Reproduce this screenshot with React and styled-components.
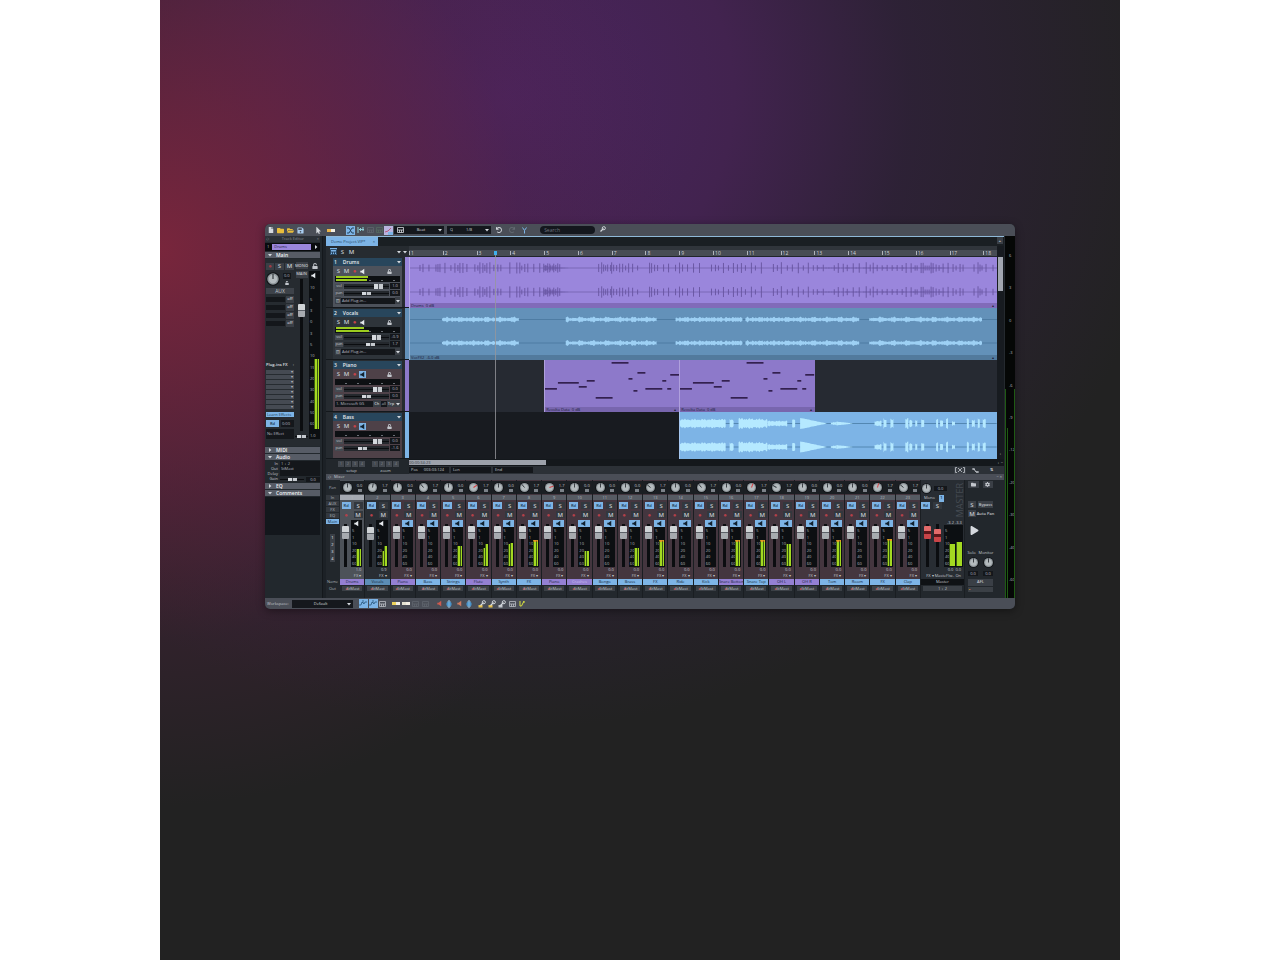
import { useState } from 'react';
import {
  FaFile,
  FaFolder,
  FaFolderOpen,
  FaMousePointer,
  FaPlay,
  FaRedo,
  FaSave,
  FaTools,
  FaUndo,
  FaUnlock,
  FaCog,
} from 'react-icons/fa';
import styled, { createGlobalStyle, css } from 'styled-components';

const GlobalStyle = createGlobalStyle`
  * {
    box-sizing: border-box;
  }
  body {
    margin: 0;
    background-color: white;
    font-family: 'Open Sans', 'Noto Sans', sans-serif;
    font-size: 4px;
    line-height: 6px;
    color: #c3c7cd;
  }
  button, input, select, textarea {
    appearance: none;
    margin: 0;
    padding: 0;
    border: none;
    border-radius: 0;
    outline: none;
    background: none;
    font: inherit;
    color: inherit;
    min-width: 0;
  }
  svg {
    display: block;
    flex-shrink: 0;
  }
`;

const PURPLE = '#9a86dc';
const BLUE = '#7db4e6';

export const Backdrop = styled.main`
  width: 75%;
  min-height: 100vh;
  margin: 0 auto;
  padding: 224px 105px 0;
  background:
    radial-gradient(ellipse 54% 58% at 0% 26%, rgba(124, 38, 60, 0.95), rgba(108, 36, 62, 0.65) 38%, rgba(84, 34, 66, 0.28) 70%, rgba(60, 34, 56, 0) 100%),
    radial-gradient(ellipse 70% 66% at 36% 10%, #4a2460, #42234f 34%, rgba(50, 33, 62, 0.7) 60%, rgba(34, 34, 34, 0) 100%),
    #222222;
`;

export const Window = styled.div`
  border-radius: 5px;
  overflow: hidden;
  background-color: #1c2126;
  box-shadow: 0 2px 8px rgba(0, 0, 0, 0.4);
`;

export const Bar = styled.div`
  display: flex;
  align-items: center;
  height: ${(props) => props.$height || 12}px;
  padding: 0 2px;
  gap: 3px;
  background-color: #4a4e57;
`;

export const Group = styled.div`
  display: flex;
  align-items: center;
  gap: ${(props) => props.$gap || 3}px;
  margin-left: ${(props) => props.$left || 0}px;
`;

export const IconBtn = styled.button`
  display: flex;
  align-items: center;
  justify-content: center;
  width: ${(props) => props.$width || 7}px;
  height: 9px;
  color: ${(props) => props.$color || '#d5d9de'};
  background-color: ${(props) => (props.$on ? BLUE : 'transparent')};
`;

export const BlackSelect = styled.select`
  width: ${(props) => props.$width}px;
  height: 8px;
  background-color: #15181d;
  color: #d5d9de;
  text-align-last: center;
`;

export const SelectWrap = styled.div`
  display: flex;
  align-items: center;
  padding: 0 2px 0 3px;
  background-color: #15181d;
`;

export const SearchBox = styled.input`
  width: 55px;
  height: 8px;
  margin-left: 9px;
  padding: 0 4px;
  border-radius: 4px;
  font-size: 5px;
  background-color: #14171d;
  &::placeholder {
    color: #6f757e;
  }
`;

export const Body = styled.div`
  display: grid;
  grid-template-columns: 58px minmax(0, 1fr) 11px;
  height: 362px;
`;

/* track editor */
export const Side = styled.aside`
  display: flex;
  flex-direction: column;
  gap: 1px;
  padding-right: 2px;
  background-color: #22282d;
  border-right: 1px solid #14181c;
`;

export const SideTitle = styled.div`
  display: flex;
  justify-content: space-between;
  height: 6px;
  padding: 0 1px;
  background-color: #2b3036;
  color: #888d95;
`;

export const NameRow = styled.div`
  display: flex;
  align-items: center;
  gap: 3px;
  height: 8px;
  padding: 0 2px;
  background-color: #090b0e;
`;

export const NameField = styled.input`
  flex: 1;
  height: 6px;
  padding: 0 2px;
  background-color: ${PURPLE};
  color: #241f4a;
`;

export const SectionHead = styled.button`
  display: flex;
  align-items: center;
  gap: 4px;
  height: 6px;
  padding: 0 3px;
  background-color: #575c66;
  color: #f0f2f4;
  font-size: 5px;
  font-weight: 600;
`;

export const Strip = styled.div`
  display: grid;
  grid-template-columns: 28px minmax(0, 1fr) 11px;
  column-gap: 1px;
  height: 187px;
  padding: 3px 0 0 1px;
  background-color: #262b30;
`;

export const StripCol = styled.div`
  display: flex;
  flex-direction: column;
  gap: ${(props) => props.$gap || 0}px;
  align-items: ${(props) => props.$align || 'stretch'};
  min-width: 0;
`;

export const Small = styled.button`
  display: flex;
  align-items: center;
  justify-content: center;
  flex: ${(props) => (props.$width ? `0 0 ${props.$width}px` : 1)};
  height: 7px;
  font-size: ${(props) => props.$size || 4}px;
  font-weight: 600;
  white-space: nowrap;
  color: ${(props) => props.$color || '#c3c7cd'};
  background-color: ${(props) => props.$bg || '#3a3f46'};
  ${(props) =>
    props.$on &&
    css`
      background-color: ${BLUE};
      color: #173048;
    `}
`;

export const AuxLabel = styled.div`
  height: 6px;
  text-align: center;
  font-size: 5px;
  background-color: #3d4249;
`;

export const Row = styled.div`
  display: flex;
  align-items: center;
  justify-content: ${(props) => props.$justify || 'flex-start'};
  gap: ${(props) => props.$gap || 0}px;
  flex-shrink: 0;
  height: ${(props) => props.$height}px;
`;

export const Slot = styled.div`
  flex: ${(props) => (props.$width ? `0 0 ${props.$width}px` : 1)};
  height: ${(props) => props.$height || 5}px;
  padding: 0 1px;
  white-space: nowrap;
  line-height: ${(props) => props.$height || 5}px;
  text-align: ${(props) => props.$align || 'left'};
  background-color: ${(props) => props.$bg || '#14171b'};
  color: ${(props) => props.$color || '#b5b9c0'};
`;

export const SliderLabel = styled.label`
  flex: 0 0 8px;
  height: 5px;
  line-height: 4px;
  text-align: center;
  background-color: #454a51;
`;

export const AudioLabel = styled.label`
  width: 13px;
  text-align: right;
`;

export const Spacer = styled.div`
  flex: 1;
`;

export const Meter = styled.div`
  display: grid;
  grid-template-columns: minmax(0, 1fr) auto;
  padding: ${(props) => props.$pad || 0}px 1px 1px;
  flex: 1;
  background-color: #0c0f12;
`;

export const Ticks = styled.div`
  display: flex;
  flex-direction: column;
  justify-content: space-between;
  line-height: 4px;
  color: #b4b8be;
`;

export const Levels = styled.div`
  display: flex;
  align-items: flex-end;
  gap: ${(props) => (props.$wide ? 1 : 0)}px;
  width: ${(props) => (props.$wide ? 13 : 5)}px;
  padding-bottom: ${(props) => props.$lift || 0}px;
`;

export const Level = styled.div`
  flex: 1;
  border-top: ${(props) => (props.$hot ? '2px solid #e39a25' : 'none')};
  border-left: 1px solid #3c5a12;
  background-color: #a3d921;
`;

export const VFader = styled.input.attrs({ type: 'range' })`
  writing-mode: vertical-lr;
  direction: rtl;
  width: 7px;
  height: ${(props) => props.$height || 43}px;
  background: linear-gradient(90deg, transparent 2px, #0b0d10 2px, #0b0d10 5px, transparent 5px);
  &::-webkit-slider-thumb {
    appearance: none;
    width: 7px;
    height: 13px;
    border-radius: 1px;
    background: ${(props) =>
      props.$red
        ? 'linear-gradient(#e26a6a 40%, #5e1519 40%, #5e1519 60%, #c94448 60%)'
        : 'linear-gradient(#cfd3d6 45%, #5b6067 45%, #5b6067 55%, #a6aaaf 55%)'};
  }
`;

export const HSlider = styled.input.attrs({ type: 'range' })`
  flex: 1;
  width: 100%;
  height: 5px;
  background: linear-gradient(#24282d 2px, #0b0d10 2px, #0b0d10 3px, #24282d 3px);
  &::-webkit-slider-thumb {
    appearance: none;
    width: 9px;
    height: ${(props) => props.$thumb || 3}px;
    background: linear-gradient(90deg, #d5d9de 40%, #4d5259 40%, #4d5259 60%, #c5c9ce 60%);
  }
`;

export const CommentBox = styled.textarea`
  height: 38px;
  resize: none;
  background-color: #13171c;
`;

/* arrange view */
export const Center = styled.section`
  display: flex;
  flex-direction: column;
  margin-left: 3px;
  border-top: 1px solid #8fb9d8;
`;

export const TabRow = styled.div`
  display: flex;
  justify-content: space-between;
  height: 9px;
  padding-right: 1px;
  background-color: #1a1f23;
`;

export const Tab = styled.button`
  display: flex;
  align-items: center;
  justify-content: space-between;
  width: 52px;
  padding: 0 3px 0 5px;
  background-color: ${BLUE};
  color: #25465f;
  white-space: nowrap;
`;

export const Arrange = styled.div`
  display: grid;
  grid-template-columns: 83px minmax(0, 1fr) 7px;
  background-color: #262b30;
`;

export const HeadTools = styled.div`
  display: flex;
  align-items: center;
  gap: 2px;
  height: 11px;
  padding: 0 2px 0 4px;
`;

export const Head = styled.div`
  display: grid;
  grid-template-columns: 6px minmax(0, 1fr) 6px;
  height: ${(props) => props.$height}px;
  border-bottom: 1px solid #14181c;
`;

export const HeadPanel = styled.div`
  display: flex;
  flex-direction: column;
  gap: 1px;
  padding: 0 2px;
  margin: 1px 1px 0;
  background-color: ${(props) => props.$bg};
`;

export const TrackTitle = styled.div`
  display: flex;
  align-items: center;
  gap: 6px;
  height: 8px;
  padding: 0 1px;
  margin: 0 -2px;
  background-color: #28465c;
  color: #e6eaee;
  font-size: 5px;
  font-weight: 600;
`;

export const TrackMeter = styled.div`
  display: flex;
  flex-direction: column;
  gap: 1px;
  height: 6px;
  padding: 0 1px;
  background:
    repeating-linear-gradient(90deg, transparent 0, transparent 10px, #6a6f76 10px, #6a6f76 12px) 0 4px / 100% 1px no-repeat,
    #0d1013;
`;

export const TrackLevel = styled.div`
  height: 2px;
  background-color: #9ccc1f;
`;

export const ColorEdge = styled.div`
  margin-left: 2px;
  background-color: ${(props) => props.$color};
`;

export const Lanes = styled.div`
  position: relative;
`;

export const Ruler = styled.div`
  display: flex;
  height: 11px;
  padding-top: 4px;
  overflow: hidden;
  border-bottom: 1px solid #20252b;
  background: linear-gradient(#30353b 4px, #474c54 4px);
`;

export const BarMark = styled.div`
  display: flex;
  align-items: center;
  gap: 1px;
  flex: 0 0 calc(100% / 17.4);
  font-size: 5px;
  color: #cfd3d8;
  &::before {
    content: '';
    width: 1px;
    height: 4px;
    background-color: #b0b4ba;
  }
`;

// clips start and end on whole bars, the lane shows 17.4 of them
export const Lane = styled.div`
  display: flex;
  height: ${(props) => props.$height}px;
  padding-left: calc(100% * ${(props) => props.$start || 0} / 17.4);
  background-color: ${(props) => props.$bg};
`;

export const Clip = styled.div`
  display: flex;
  flex-direction: column;
  flex: 0 0 ${(props) => (props.$bars ? `calc(100% * ${props.$bars} / 13.4)` : '100%')};
  border-left: 1px solid rgba(240, 235, 255, 0.35);
  background-color: ${(props) => props.$bg};
  > svg {
    width: 100%;
    flex: 1;
    min-height: 0;
  }
`;

export const ClipFoot = styled.div`
  display: flex;
  justify-content: space-between;
  height: 5px;
  padding: 0 3px 0 1px;
  line-height: 5px;
  color: #1d1f3c;
  background-color: ${(props) => props.$bg};
`;

export const Playhead = styled.div`
  position: absolute;
  top: 5px;
  bottom: 0;
  left: 14.6%;
  width: 1px;
  background-color: rgba(150, 150, 155, 0.8);
  &::before {
    content: '';
    position: absolute;
    left: -1px;
    width: 3px;
    height: 4px;
    background-color: #3fb0ee;
  }
`;

export const VScroll = styled.div`
  display: flex;
  flex-direction: column;
  align-items: center;
  justify-content: space-between;
  padding: 11px 0 2px;
  background-color: #171b20;
  &::before {
    content: '';
    width: 5px;
    height: 34px;
    background-color: #a2a7b1;
  }
`;

export const Footer = styled.div`
  display: grid;
  grid-template-columns: 83px minmax(0, 1fr);
  height: 15px;
  background-color: #22272c;
`;

export const Squares = styled.div`
  display: grid;
  grid-template-columns: repeat(4, 6px);
  grid-auto-rows: 6px;
  gap: 1px;
  padding-top: 2px;
  > button {
    background-color: #43484f;
    color: #7f848b;
  }
  > span {
    grid-column: 1 / -1;
    text-align: center;
  }
`;

export const HScroll = styled.div`
  display: flex;
  justify-content: space-between;
  height: 7px;
  padding: 1px 0;
  background-color: #14181c;
  > div {
    width: 23%;
    height: 5px;
    background-color: #9da2ab;
    color: #3a4048;
    line-height: 5px;
  }
`;

export const Transport = styled.div`
  display: flex;
  align-items: center;
  gap: 2px;
  height: 8px;
  background-color: #2c3137;
`;

export const Field = styled.div`
  display: flex;
  gap: 6px;
  width: 40px;
  height: 6px;
  padding: 0 2px;
  background-color: #14171b;
`;

/* console */
export const Console = styled.div`
  display: grid;
  grid-template-columns: 14px minmax(0, 1fr) 44px 34px 5px;
  flex: 1;
  background-color: #22272c;
`;

export const Labels = styled.div`
  display: flex;
  flex-direction: column;
  padding: 1px 1px 0 0;
  text-align: center;
  color: #a9aeb5;
`;

export const Channels = styled.div`
  display: grid;
  grid-template-columns: repeat(23, minmax(0, 1fr));
`;

export const ChannelBox = styled.div`
  display: flex;
  flex-direction: column;
  padding-top: 1px;
  border-right: 1px solid #1a1e22;
  background-color: ${(props) => props.$bg || '#44363f'};
`;

export const KnobRow = styled.div`
  display: flex;
  align-items: center;
  justify-content: space-around;
  height: 13px;
  margin-bottom: 1px;
  background-color: #1b1f23;
`;

export const PanValue = styled.div`
  display: flex;
  flex-direction: column;
  align-items: center;
  gap: 1px;
  line-height: 5px;
  &::after {
    content: '';
    width: 4px;
    height: 3px;
    background-color: #7c8289;
  }
`;

export const Num = styled.div`
  display: flex;
  justify-content: center;
  height: 5px;
  margin-bottom: 1px;
  line-height: 5px;
  color: ${(props) => props.$color || '#b5b9c0'};
  background-color: ${(props) => props.$bg || '#565b63'};
`;

export const FaderRow = styled.div`
  display: grid;
  grid-template-columns: 11px minmax(0, 1fr);
  height: 47px;
  margin-top: 1px;
  padding-right: 2px;
  > input {
    align-self: end;
    justify-self: center;
  }
`;

export const Value = styled.div`
  height: ${(props) => props.$height || 5}px;
  padding: 0 3px;
  line-height: ${(props) => props.$height || 5}px;
  text-align: right;
  white-space: nowrap;
`;

export const ChannelName = styled.div`
  height: 6px;
  white-space: nowrap;
  text-align: center;
  background-color: ${(props) => props.$bg};
  color: ${(props) => props.$color || '#14263a'};
`;

export const Out = styled.div`
  flex: 1;
  padding: 1px 2px 0;
  background-color: #23282d;
  > div {
    height: 5px;
    white-space: nowrap;
    line-height: 5px;
    text-align: center;
    background-color: #3b4046;
  }
  i {
    color: #e0625c;
  }
`;

export const MasterText = styled.div`
  writing-mode: vertical-rl;
  transform: rotate(180deg);
  font-size: 9px;
  line-height: 8px;
  color: #454b52;
`;

export const MasterKnob = styled.div`
  display: flex;
  align-items: center;
  gap: 2px;
  width: 26px;
  height: 14px;
`;

export const MasterFaders = styled.div`
  display: grid;
  grid-template-columns: 9px 9px minmax(0, 1fr);
  column-gap: 1px;
  height: 47px;
  margin-top: 1px;
  padding: 0 1px 0 3px;
  > input {
    align-self: end;
  }
`;

export const Extras = styled.div`
  display: flex;
  flex-direction: column;
  gap: 2px;
  padding: 1px 6px 6px 3px;
`;

export const PeakMeter = styled.div`
  display: grid;
  grid-template-columns: 2px 2px minmax(0, 1fr) 1px;
  background-color: #050706;
  border-left: 1px solid #24292e;
  > ${Ticks} {
    padding: 18px 0 16px;
  }
`;

export const PeakLine = styled.div`
  margin-top: ${(props) => props.$top}px;
  border-left: 1px solid #1f5a14;
`;

const Knob = ({ size = 11, angle = 0, red, label }) => (
  <svg width={size} height={size} viewBox="0 0 12 12" role="img" aria-label={label}>
    <circle cx="6" cy="6" r="5.8" fill="#0f1215" />
    <circle cx="6" cy="6" r="4.9" fill="#8f979b" />
    <circle cx="6" cy="6" r="3.6" fill="#b4bbbe" />
    <path
      d="M6 1.4V6"
      stroke={red ? '#d8393c' : '#30363a'}
      strokeWidth="1"
      transform={`rotate(${angle} 6 6)`}
    />
  </svg>
);

const Speaker = ({ color = '#e6eaee' }) => (
  <svg width="7" height="7" viewBox="0 0 8 8">
    <path d="M1.5 3H3L6 .8v6.4L3 5H1.5z" fill={color} />
  </svg>
);

const Caret = ({ right }) => (
  <svg width="4" height="4" viewBox="0 0 4 4">
    <path d={right ? 'M1 0v4l2.400-2z' : 'M0 1h4L2 3.400z'} fill="#d5d9de" />
  </svg>
);

const Chips = ({ colors }) => (
  <svg width="8" height="5" viewBox="0 0 8 5">
    <path d="M0 1h4v3H0z" fill={colors[0]} />
    <path d="M4 1h4v3H4z" fill={colors[1]} />
  </svg>
);

const Panels = ({ color }) => (
  <svg width="7" height="6" viewBox="0 0 7 6">
    <path d="M.5.5h6v5h-6zM.5 3h6M2.500 3v2.500M4.500 3v2.500" stroke={color} strokeWidth=".8" fill="none" />
  </svg>
);

const Globe = () => (
  <svg width="6" height="8" viewBox="0 0 6 8">
    <circle cx="3" cy="4" r="2.600" fill="#4a93c9" />
    <path d="M3 0v8M1.500 2L3 .5 4.500 2M1.500 6L3 7.500 4.500 6" stroke="#aad4ef" strokeWidth=".6" fill="none" />
  </svg>
);

const Wrench = ({ chip }) => (
  <svg width="8" height="8" viewBox="0 0 8 8">
    <path d="M.5 5h4v2.500h-4z" fill={chip} />
    <path d="M2.500 5.500L5.500 2.500" stroke="#d5d9de" strokeWidth="1.200" />
    <circle cx="5.800" cy="2.200" r="1.600" fill="none" stroke="#d5d9de" strokeWidth=".9" />
  </svg>
);

const Nodes = () => (
  <svg width="8" height="7" viewBox="0 0 8 7">
    <path d="M0 5h2l1-3 2 2 1-2h2M4 0v3" stroke="#2c587c" strokeWidth=".8" fill="none" />
  </svg>
);

// horizontal position of every drum hit on a 588 wide lane
const drumHits = [
  10, 13, 19, 26, 28, 30, 35, 41, 45, 48, 50, 53, 57, 65, 68, 70, 73, 75, 77,
  80, 84, 88, 91, 100, 107, 110, 112, 115, 118, 124, 130, 134, 136, 138, 140,
  141, 143, 144, 146, 148, 150, 189, 192, 194, 196, 198, 201, 202, 204, 207,
  210, 213, 216, 219, 223, 228, 240, 242, 245, 248, 254, 259, 266, 270, 273,
  278, 284, 290, 302, 306, 309, 314, 319, 324, 328, 332, 336, 342, 346, 352,
  364, 368, 372, 378, 383, 389, 394, 399, 404, 408, 414, 425, 429, 434, 438,
  444, 450, 457, 461, 464, 468, 473, 478, 483, 488, 493, 497, 502, 506, 508,
  512, 514, 516, 518, 520, 522, 524, 527, 530, 534, 539, 544, 547, 551, 554,
  565, 569, 571, 573, 577, 584,
];

const vocalParts = [
  [32, 109],
  [156, 247],
  [266, 333],
  [336, 450],
  [460, 573],
];

// [from, to, height at start, height at end]
const bassParts = [
  [0, 46, 5, 5],
  [50, 54, 5, 4],
  [59, 88, 6, 5],
  [88, 108, 3, 3],
  [113, 116, 5, 5],
  [121, 148, 6, 0],
  [152, 158, 1, 2],
  [158, 175, 2, 0],
  [196, 203, 3, 3],
  [205, 208, 6, 5],
  [212, 215, 5, 5],
  [227, 230, 6, 6],
  [231, 234, 4, 4],
  [237, 239, 4, 4],
  [243, 246, 5, 5],
  [258, 260, 5, 5],
  [262, 265, 4, 4],
  [268, 270, 6, 6],
  [274, 277, 3, 2],
  [289, 291, 6, 6],
  [294, 297, 4, 4],
  [300, 302, 6, 6],
  [305, 308, 5, 5],
];

const noise = (x) => Math.abs(Math.sin(x * 12.9) * 0.6 + Math.sin(x * 4.1) * 0.4);
const lumps = (x) => Math.abs(Math.sin(x * 0.23) * 0.5 + Math.sin(x * 0.71) * 0.3 + Math.sin(x * 1.9) * 0.3);

const envelope = (from, to, a, b, y, rough = 0.5, shape = noise) => {
  const top = [];
  const bottom = [];
  for (let x = from; x <= to; x += 1) {
    const part = (x - from) / (to - from);
    const h = (a + (b - a) * part) * (1 - rough + rough * shape(x));
    top.push(`${x},${(y - h).toFixed(1)}`);
    bottom.unshift(`${x},${(y + h).toFixed(1)}`);
  }
  return `M${top.join('L')}L${bottom.join('L')}Z`;
};

const DrumWave = () => (
  <svg viewBox="0 0 588 46" preserveAspectRatio="none">
    {[11, 35].map((y) => (
      <g key={y} stroke="#66549f">
        <path d={`M0 ${y}H588`} strokeWidth="0.6" />
        <path d={envelope(134, 160, 3, 0, y, 0.6)} fill="#7866b6" stroke="none" />
        <path d={envelope(408, 540, 1, 1, y, 0.9)} fill="#7866b6" stroke="none" />
        <path
          d={drumHits
            .map((x) => {
              const h = 2.4 + noise(x) * 3.4;
              return `M${x} ${y - h}V${y + h}`;
            })
            .join('')}
          strokeWidth="0.9"
        />
      </g>
    ))}
  </svg>
);

const VocalWave = () => (
  <svg viewBox="0 0 588 47" preserveAspectRatio="none">
    {[11.5, 35].map((y) => (
      <g key={y}>
        <path d={`M0 ${y}H588`} stroke="#3f6e93" strokeWidth="0.6" />
        {vocalParts.map(([from, to]) => (
          <path key={from} d={envelope(from, to, 3, 3, y, 0.65, lumps)} fill="#9dd0f4" />
        ))}
      </g>
    ))}
  </svg>
);

const BassWave = () => (
  <svg viewBox="0 0 319 47" preserveAspectRatio="none">
    {[11.5, 35].map((y) => (
      <g key={y}>
        <path d={`M0 ${y}H319`} stroke="#41739c" strokeWidth="0.7" />
        {bassParts.map(([from, to, a, b]) => (
          <path
            key={from}
            d={envelope(from, to, a, b, y, b === 0 ? 0.1 : 0.4)}
            fill="#b5e9ff"
          />
        ))}
      </g>
    ))}
  </svg>
);

const notes = [
  [0, 28, 12],
  [13, 22, 21],
  [34, 26, 8],
  [42, 20, 8],
  [51, 37, 17],
  [67, 2, 17],
  [84, 18, 4],
  [89, 30, 4],
  [93, 12, 8],
  [101, 28, 17],
  [118, 20, 4],
  [123, 28, 4],
  [126, 14, 9],
];

const Notes = () => (
  <svg viewBox="0 0 135 47" preserveAspectRatio="none">
    {notes.map(([x, y, width]) => (
      <rect key={x} x={x} y={y} width={width} height="1.7" fill="#33204f" />
    ))}
  </svg>
);

const tracks = [
  { name: 'Drums', height: 51, bg: '#4d525b', color: PURPLE, level: [50, 49], vol: 82, pan: 50, values: ['1.0', '0.0'], plug: 'Add Plug-in...' },
  { name: 'Vocals', height: 52, bg: '#2e343a', color: '#6391b9', level: [44, 52], vol: 78, pan: 60, values: ['-0.9', '1.7'], plug: 'Add Plug-in...' },
  { name: 'Piano', height: 52, bg: '#4e4148', color: '#8d79ca', muted: true, vol: 80, pan: 50, values: ['0.0', '0.0'], plug: '1. Microsoft GS' },
  { name: 'Bass', height: 47, bg: '#4e4148', color: BLUE, muted: true, vol: 80, pan: 40, values: ['0.0', '-1.6'] },
];

const TrackHead = ({ track, index }) => {
  const [muted, setMuted] = useState(Boolean(track.muted));
  return (
    <Head $height={track.height}>
      <span />
      <HeadPanel $bg={track.bg}>
        <TrackTitle>
          <span>{index + 1}</span>
          <span>{track.name}</span>
          <Spacer />
          <Caret />
        </TrackTitle>
        <Row $height={8} $gap={1}>
          <Small $width={7} $size={6} $bg="transparent">S</Small>
          <Small $width={7} $size={6} $bg="transparent">M</Small>
          <Small $width={7} $size={6} $color="#c5444c" $bg="transparent" aria-label="Record">●</Small>
          <Small $width={7} $on={muted} $bg="transparent" aria-label="Monitor" onClick={() => setMuted(!muted)}>
            <Speaker color={muted ? '#10202e' : '#e6eaee'} />
          </Small>
          <Spacer />
          <FaUnlock size={5} />
          <Group $left={7} />
        </Row>
        <TrackMeter>
          {(track.level || []).map((width, idx) => (
            <TrackLevel key={idx} style={{ width: `${width}%` }} />
          ))}
        </TrackMeter>
        {['vol', 'pan'].map((el, idx) => (
          <Row key={el} $height={6} $gap={1}>
            <SliderLabel htmlFor={`${el}${index}`}>{el}</SliderLabel>
            <HSlider
              id={`${el}${index}`}
              $thumb={el === 'vol' ? 5 : 3}
              defaultValue={el === 'vol' ? track.vol : track.pan}
            />
            <Slot $width={10} $height={6} $align="center">{track.values[idx]}</Slot>
          </Row>
        ))}
        {track.plug && (
          <Row $height={7}>
            {!track.muted && <Small $width={6}>◫</Small>}
            <Slot $height={6}>{track.plug}</Slot>
            {track.muted && (
              <>
                <Small $width={8}>Ch</Small>
                <Slot $width={6} $height={6}>all</Slot>
                <Small $width={8}>Trp</Small>
              </>
            )}
            <Small $width={5} aria-label="Plug-in list"><Caret /></Small>
          </Row>
        )}
      </HeadPanel>
      <ColorEdge $color={track.color} />
    </Head>
  );
};

const channels = [
  ['Drums', 'p', [17, 17], '1.0', 0],
  ['Vocals', 'v', [15, 20], '0.9', 10],
  ['Piano', 'p', null, '0.0', 0],
  ['Bass', 'b', null, '0.0', -40],
  ['Strings', 'b', [20, 20], '0.0', 0],
  ['Flute', 'p', [18, 22], '0.0', 55],
  ['Synth', 'b', [22, 23], '0.0', 0],
  ['FX', 'b', [26, 26], '0.0', -40],
  ['Piano', 'p', null, '0.0', 70],
  ['Crashes', 'c', [15, 15], '0.0', 0],
  ['Bongo', 'b', null, '0.0', 0],
  ['Brass', 'b', [18, 18], '0.0', 0],
  ['FX', 'b', [26, 26], '0.0', -50],
  ['Ride', 'b', null, '0.0', 0],
  ['Kick', 'b', null, '0.0', -40],
  ['Snare Bottom', 'p', [26, 26], '0.0', 0],
  ['Snare Top', 'b', [26, 26], '0.0', 20],
  ['OH L', 'p', [22, 22], '0.0', -60],
  ['OH R', 'p', null, '0.0', 0],
  ['Tom', 'b', [26, 26], '0.0', 0],
  ['Room', 'b', null, '0.0', 0],
  ['FX', 'b', [27, 27], '0.0', 15],
  ['Clap', 'b', null, '0.0', -50],
];

const nameColors = { p: '#9480d3', v: '#5c8db5', b: BLUE, c: '#9480d3' };

const meterScale = ['5', '1', '10', '20', '40', '60'];

const Channel = ({ channel, index }) => {
  const [name, color, level, value, angle] = channel;
  const audible = index < 2;
  const bg = index === 0 ? '#4d5259' : index === 1 ? '#292e34' : undefined;
  return (
    <ChannelBox $bg={bg}>
      <KnobRow>
        <Knob label={`${name} pan`} angle={angle} red={angle > 12} />
        <PanValue>{angle === 0 ? '0.0' : '1.7'}</PanValue>
      </KnobRow>
      <Num $bg={index === 0 ? '#a4a9b1' : undefined}>{index + 1}</Num>
      <Row $height={9} $gap={3} $justify="center">
        <Small $width={9} $on>Rd</Small>
        <Small $width={9} $size={6} $bg="#33383e">S</Small>
      </Row>
      <Row $height={9} $gap={3} $justify="center">
        <Small $width={9} $size={6} $color="#b5404a" $bg="transparent" aria-label="Record">●</Small>
        <Small $width={9} $size={6} $bg="#33383e">M</Small>
      </Row>
      <FaderRow>
        <VFader aria-label={`${name} volume`} defaultValue={index === 1 ? 90 : 94} />
        <StripCol>
          <Small $width={7} $on={!audible} $bg="#0c0f12" aria-label={`${name} monitor`}>
            <Speaker color={audible ? '#e6eaee' : '#10202e'} />
          </Small>
          <Meter $pad={2}>
            <Ticks>
              {meterScale.map((el) => (
                <span key={el}>{el}</span>
              ))}
            </Ticks>
            <Levels>
              {(level || []).map((h, idx) => (
                <Level key={idx} $hot={h > 25} style={{ height: `${h}px` }} />
              ))}
            </Levels>
          </Meter>
        </StripCol>
      </FaderRow>
      <Value>{value}</Value>
      <Value $height={7}>FX ▾</Value>
      <ChannelName $bg={nameColors[color]} $color={color === 'c' ? '#c9bdf0' : undefined}>{name}</ChannelName>
      <Out>
        <div><i>◂</i>StMast</div>
      </Out>
    </ChannelBox>
  );
};

const TrackEditor = () => (
  <Side>
    <SideTitle>
      <span>◇</span>
      <span>Track Editor</span>
      <span>×</span>
    </SideTitle>
    <NameRow>
      <span>1</span>
      <NameField aria-label="Track name" defaultValue="Drums" />
      <Caret right />
    </NameRow>
    <SectionHead><Caret />Main</SectionHead>
    <Strip>
      <StripCol $gap={2}>
        <Row $height={8} $gap={1}>
          <Small $width={8} $size={6} $color="#a23a43" aria-label="Record">●</Small>
          <Small $width={9} $size={6}>S</Small>
          <Small $width={9} $size={6}>M</Small>
        </Row>
        <Row $height={14} $gap={3}>
          <Knob size={14} label="Pan" />
          <StripCol $gap={2} $align="center">
            <Slot $width={6} $height={6}>0.0</Slot>
            <FaUnlock size={4} />
          </StripCol>
        </Row>
        <AuxLabel>AUX</AuxLabel>
        {[1, 2, 3, 4].map((el) => (
          <Row key={el} $height={6} $gap={1}>
            <Slot />
            <Small $width={8}>off</Small>
          </Row>
        ))}
        <Spacer />
        <Row $height={6} $justify="space-between"><b>Plug-ins FX</b><span>‹</span></Row>
        <StripCol $gap={1}>
          {[1, 2, 3, 4, 5, 6, 7, 8].map((el) => (
            <Row key={el} $height={4}>
              <Slot $height={4} $bg="#454a52" $align="right">▾</Slot>
            </Row>
          ))}
        </StripCol>
        <Row $height={7}><Slot $bg={BLUE} $color="#1c3a52">Learn Effects</Slot></Row>
        <Row $height={7} $gap={2}>
          <Small $width={13} $on>Rd</Small>
          <Slot $height={7}>0:00</Slot>
        </Row>
        <Row $height={10}><Slot $height={10}>No Effect</Slot></Row>
        <Row $height={5} />
      </StripCol>
      <StripCol $align="center" $gap={2}>
        <Row $height={7}><Small $width={12}>MONO</Small></Row>
        <Row $height={6}><Small $width={12}>MAIN</Small></Row>
        <VFader $height={152} aria-label="Main volume" defaultValue={82} />
        <Row $height={6}><HSlider aria-label="Width" /></Row>
      </StripCol>
      <StripCol $gap={2}>
        <Row $height={7} $justify="center"><FaUnlock size={6} /></Row>
        <Meter $pad={1}>
          <Ticks>
            <Speaker />
            {['10', '5', '3', '0', '3', '5', '10', '15', '20', '30', '40', '50', '60', '1.0'].map((el, idx) => (
              <span key={idx}>{el}</span>
            ))}
          </Ticks>
          <Levels $lift={9}>
            <Level style={{ height: '70px' }} />
            <Level style={{ height: '70px' }} />
          </Levels>
        </Meter>
        <Row $height={5} />
      </StripCol>
    </Strip>
    <SectionHead><Caret right />MIDI</SectionHead>
    <SectionHead><Caret />Audio</SectionHead>
    <StripCol>
      {[['In', '1 + 2'], ['Out', 'StMast'], ['Delay', '']].map(([label, value]) => (
        <Row key={label} $height={5} $gap={2}>
          <AudioLabel as="span">{label}</AudioLabel>
          <Slot>{value}</Slot>
        </Row>
      ))}
      <Row $height={6} $gap={2}>
        <AudioLabel htmlFor="gain">Gain</AudioLabel>
        <HSlider id="gain" />
        <Slot $width={14} $align="center">0.0</Slot>
      </Row>
    </StripCol>
    <SectionHead><Caret right />EQ</SectionHead>
    <SectionHead><Caret />Comments</SectionHead>
    <CommentBox aria-label="Comments" />
  </Side>
);

const Master = () => (
  <ChannelBox $bg="#282d33">
    <Row $height={38} $justify="space-between">
      <StripCol>
        <MasterKnob>
          <Knob label="Master pan" />
          <Slot $align="center">0.0</Slot>
        </MasterKnob>
        <Row $height={6} $gap={1}>
          <Value $height={6}>Mono</Value>
          <Small $width={5} $on>1</Small>
        </Row>
        <Row $height={9} $gap={3}>
          <Small $width={9} $on>Rd</Small>
          <Small $width={9} $size={6} $bg="#33383e">S</Small>
        </Row>
        <Row $height={9} />
      </StripCol>
      <MasterText>MASTER</MasterText>
    </Row>
    <MasterFaders>
      <VFader $red aria-label="Master left" defaultValue={94} />
      <VFader $red aria-label="Master right" defaultValue={84} />
      <StripCol>
        <Value>-3.2 -3.3</Value>
        <Meter $pad={4}>
          <Ticks>
            {meterScale.map((el) => (
              <span key={el}>{el}</span>
            ))}
          </Ticks>
          <Levels $wide>
            <Level style={{ height: '22px' }} />
            <Level style={{ height: '24px' }} />
          </Levels>
        </Meter>
      </StripCol>
    </MasterFaders>
    <Value>0.0&nbsp; 0.0</Value>
    <Value $height={7}>FX ▾ MasteFlw.. On</Value>
    <ChannelName $bg="#0f1215" $color="#c3c7cd">Master</ChannelName>
    <Out><div>1 + 2</div></Out>
  </ChannelBox>
);

const App = () => {
  const [search, setSearch] = useState('');
  return (
    <Backdrop>
      <GlobalStyle />
      <Window>
        <Bar>
          <Group>
            <IconBtn aria-label="New"><FaFile size={6} /></IconBtn>
            <IconBtn aria-label="Open" $color="#e8bd3c"><FaFolder size={7} /></IconBtn>
            <IconBtn aria-label="Import" $color="#e8bd3c"><FaFolderOpen size={7} /></IconBtn>
            <IconBtn aria-label="Save" $color="#a9cdf0"><FaSave size={7} /></IconBtn>
          </Group>
          <Group $left={8}>
            <IconBtn aria-label="Select"><FaMousePointer size={7} /></IconBtn>
            <IconBtn aria-label="Draw" $width={12}>
              <Chips colors={['#e7b34a', '#f3efe4']} />
            </IconBtn>
          </Group>
          <Group $left={6} $gap={1}>
            <IconBtn aria-label="Snap" $width={9} $on>
              <svg width="9" height="9" viewBox="0 0 9 9">
                <path d="M1 2l2 0 3 5h2M1 7h2l3-5h2" stroke="#1e3a52" strokeWidth=".9" fill="none" />
              </svg>
            </IconBtn>
            <IconBtn aria-label="Group" $width={9}>
              <svg width="8" height="8" viewBox="0 0 8 8">
                <path d="M1 1v6M3.500 2v3M6 1v4M2 3.500h5" stroke="#8fd0d8" strokeWidth="1" />
              </svg>
            </IconBtn>
            <IconBtn aria-label="Crossfade" $width={8}><Panels color="#5f646d" /></IconBtn>
            <IconBtn aria-label="Ripple" $width={8}><Panels color="#566a60" /></IconBtn>
            <IconBtn aria-label="Automation" $width={9} $on>
              <svg width="9" height="9" viewBox="0 0 9 9">
                <path d="M0 0h9v6H4v3H0z" fill="#b9b4de" />
                <path d="M1 6l3-1 3-3" stroke="#b85a80" fill="none" />
              </svg>
            </IconBtn>
            <SelectWrap>
              <Panels color="#d5d9de" />
              <BlackSelect aria-label="Grid" $width={34}><option>Beat</option></BlackSelect>
              <Caret />
            </SelectWrap>
          </Group>
          <SelectWrap>
            <span>Q</span>
            <BlackSelect aria-label="Quantize" $width={32}><option>1/8</option></BlackSelect>
            <Caret />
          </SelectWrap>
          <Group $left={1} $gap={6}>
            <IconBtn aria-label="Undo"><FaUndo size={6} /></IconBtn>
            <IconBtn aria-label="Redo" $color="#656b73"><FaRedo size={6} /></IconBtn>
            <IconBtn aria-label="Filter">
              <svg width="5" height="7" viewBox="0 0 5 7">
                <path d="M.5.5l2 3 2-3M2.500 3.500v3" stroke="#7db4e6" fill="none" />
              </svg>
            </IconBtn>
          </Group>
          <SearchBox
            aria-label="Search"
            placeholder="Search"
            value={search}
            onChange={(e) => setSearch(e.target.value)}
          />
          <IconBtn aria-label="Tools"><Wrench chip="none" /></IconBtn>
        </Bar>
        <Body>
          <TrackEditor />
          <Center>
            <TabRow>
              <Tab>Demo Project.VIP* <span>×</span></Tab>
              <Small $width={6}>+</Small>
            </TabRow>
            <Arrange>
              <div>
                <HeadTools>
                  <Small $width={7} $on aria-label="Layout"><Panels color="#173048" /></Small>
                  <Small $width={7} $size={6} $bg="transparent">S</Small>
                  <Small $width={7} $size={6} $bg="transparent">M</Small>
                  <Spacer />
                  <Caret />
                  <Caret />
                </HeadTools>
                {tracks.map((track, idx) => (
                  <TrackHead key={track.name} track={track} index={idx} />
                ))}
              </div>
              <Lanes>
                <Ruler>
                  {Array.from({ length: 18 }, (_, idx) => (
                    <BarMark key={idx}>{idx + 1}</BarMark>
                  ))}
                </Ruler>
                <Lane $height={51}>
                  <Clip $bg={PURPLE}>
                    <DrumWave />
                    <ClipFoot $bg="#816bb9"><span>Drums&nbsp; 0 dB</span><span>▴</span></ClipFoot>
                  </Clip>
                </Lane>
                <Lane $height={52}>
                  <Clip $bg="#6391b9">
                    <VocalWave />
                    <ClipFoot $bg="#527a9d"><span>VocFX2&nbsp; -6.0 dB</span><span>▴</span></ClipFoot>
                  </Clip>
                </Lane>
                <Lane $height={52} $start={4} $bg="#262a32">
                  {[1, 2].map((el) => (
                    <Clip key={el} $bars={4} $bg="#8d79ca">
                      <Notes />
                      <ClipFoot $bg="#7866ae"><span>Revolta Data&nbsp; 0 dB</span><span>▴</span></ClipFoot>
                    </Clip>
                  ))}
                </Lane>
                <Lane $height={47} $start={8} $bg="#181b20">
                  <Clip $bg={BLUE}>
                    <BassWave />
                  </Clip>
                </Lane>
                <Playhead />
              </Lanes>
              <VScroll><span>+</span></VScroll>
            </Arrange>
            <Footer>
              <Group $gap={7} $left={12}>
                {['setup', 'zoom'].map((el) => (
                  <Squares key={el}>
                    {[1, 2, 3, 4].map((num) => (
                      <button key={num} type="button">{num}</button>
                    ))}
                    <span>{el}</span>
                  </Squares>
                ))}
              </Group>
              <div>
                <HScroll><div>00:00:34:23</div><span>+ −&nbsp;</span></HScroll>
                <Transport>
                  <Field><span>Pos</span><span>003:03:124</span></Field>
                  <Field>Len</Field>
                  <Field>End</Field>
                  <Spacer />
                  <Small $width={12} aria-label="Fit">
                    <svg width="10" height="6" viewBox="0 0 10 6">
                      <path d="M2 .5H.5v5H2M8 .5h1.500v5H8M3 1l4 4M7 1L3 5" stroke="#c3c7cd" strokeWidth=".8" fill="none" />
                    </svg>
                  </Small>
                  <Small $width={14} $bg="transparent" aria-label="Curve">
                    <svg width="7" height="5" viewBox="0 0 7 5">
                      <path d="M0 1h2l2 3h3M2 0v2M5 3v2" stroke="#c3c7cd" fill="none" />
                    </svg>
                  </Small>
                  <Small $width={14} $bg="transparent">⇅</Small>
                  <Group $left={4} />
                </Transport>
              </div>
            </Footer>
            <Bar $height={6}>
              <span>◇</span>
              <span>Mixer</span>
              <Spacer />
              <span>− ×</span>
            </Bar>
            <Console>
              <Labels>
                <Row $height={14} $justify="center">Pan</Row>
                {['In', 'AUX', 'FX', 'EQ'].map((el) => (
                  <Num key={el} $bg="#33383e">{el}</Num>
                ))}
                <Num $bg={BLUE} $color="#173048">Main</Num>
                <Spacer />
                {[1, 2, 3, 4].map((el) => (
                  <Row key={el} $height={7} $justify="center">
                    <Small $width={5}>{el}</Small>
                  </Row>
                ))}
                <Row $height={17} />
                <Row $height={6} $justify="center">Name</Row>
                <Row $height={7} $justify="center">Out</Row>
                <Row $height={6} />
              </Labels>
              <Channels>
                {channels.map((channel, idx) => (
                  <Channel key={idx} channel={channel} index={idx} />
                ))}
              </Channels>
              <Master />
              <Extras>
                <Row $height={7} $gap={4}>
                  <Small aria-label="Load preset"><FaFolder size={5} /></Small>
                  <Small aria-label="Mixer settings"><FaCog size={5} /></Small>
                </Row>
                <Row $height={9} />
                <Row $height={7} $gap={2}>
                  <Small $width={8} $size={6}>S</Small>
                  <Small>Bypass</Small>
                </Row>
                <Row $height={7} $gap={2}>
                  <Small $width={8} $size={6}>M</Small>
                  <Small $bg="transparent">Auto Pan</Small>
                </Row>
                <Row $height={22}>
                  <IconBtn $width={12} aria-label="Play"><FaPlay size={9} /></IconBtn>
                </Row>
                <Spacer />
                <Row $height={5} $gap={3} $justify="center"><span>Solo</span><span>Monitor</span></Row>
                <Row $height={11} $gap={4}>
                  <Knob label="Solo" />
                  <Knob label="Monitor" />
                </Row>
                <Row $height={7} $gap={5}>
                  <Slot $align="center">0.0</Slot>
                  <Slot $align="center">0.0</Slot>
                </Row>
                <Row $height={6}><Small>AFL</Small></Row>
                <Row $height={5}><Slot $color="#e08b2c" $bg="#3b4046">▪</Slot></Row>
              </Extras>
              <span />
            </Console>
          </Center>
          <PeakMeter>
            <PeakLine $top={153} />
            <PeakLine $top={192} />
            <Ticks>
              {['6', '3', '0', '-3', '-6', '-9', '-12', '-20', '-30', '-40', '-60'].map((el) => (
                <span key={el}>{el}</span>
              ))}
            </Ticks>
            <PeakLine $top={153} />
          </PeakMeter>
        </Body>
        <Bar $height={11}>
          <label htmlFor="workspace">Workspace:</label>
          <SelectWrap>
            <BlackSelect id="workspace" $width={52}><option>Default</option></BlackSelect>
            <Caret />
          </SelectWrap>
          <Group $left={3} $gap={1}>
            <IconBtn $on $width={9} aria-label="Arranger"><Nodes /></IconBtn>
            <IconBtn $on $width={9} aria-label="Mixer"><Nodes /></IconBtn>
            <IconBtn $width={8} aria-label="Manager"><Panels color="#b9bdc3" /></IconBtn>
          </Group>
          <Group $left={2} $gap={2}>
            <IconBtn $width={8} aria-label="Marker"><Chips colors={['#ecd35c', '#f3efe4']} /></IconBtn>
            <IconBtn $width={8} aria-label="Range"><Chips colors={['#e4e2d2', '#f3efe4']} /></IconBtn>
            <IconBtn $width={8} aria-label="Cut"><Panels color="#5f646d" /></IconBtn>
            <IconBtn $width={8} aria-label="Paste"><Panels color="#5f646d" /></IconBtn>
          </Group>
          <Group $left={3}>
            <IconBtn aria-label="Mono left"><Speaker color="#cf5a4e" /></IconBtn>
            <IconBtn aria-label="Zoom vertical"><Globe /></IconBtn>
            <IconBtn aria-label="Mono right"><Speaker color="#cf7a5e" /></IconBtn>
            <IconBtn aria-label="Zoom horizontal"><Globe /></IconBtn>
          </Group>
          <Group $left={3}>
            <IconBtn aria-label="Pencil"><Wrench chip="#e6c14d" /></IconBtn>
            <IconBtn aria-label="Brush"><Wrench chip="#e6c14d" /></IconBtn>
            <IconBtn aria-label="Link"><Wrench chip="#c3c7cd" /></IconBtn>
            <IconBtn aria-label="Keys"><Panels color="#b9bdc3" /></IconBtn>
            <IconBtn aria-label="Notes">
              <svg width="6" height="7" viewBox="0 0 6 7">
                <path d="M1 1v5h1.500L5 1v2" stroke="#d8e040" fill="none" />
              </svg>
            </IconBtn>
          </Group>
        </Bar>
      </Window>
    </Backdrop>
  );
};

export default App;
